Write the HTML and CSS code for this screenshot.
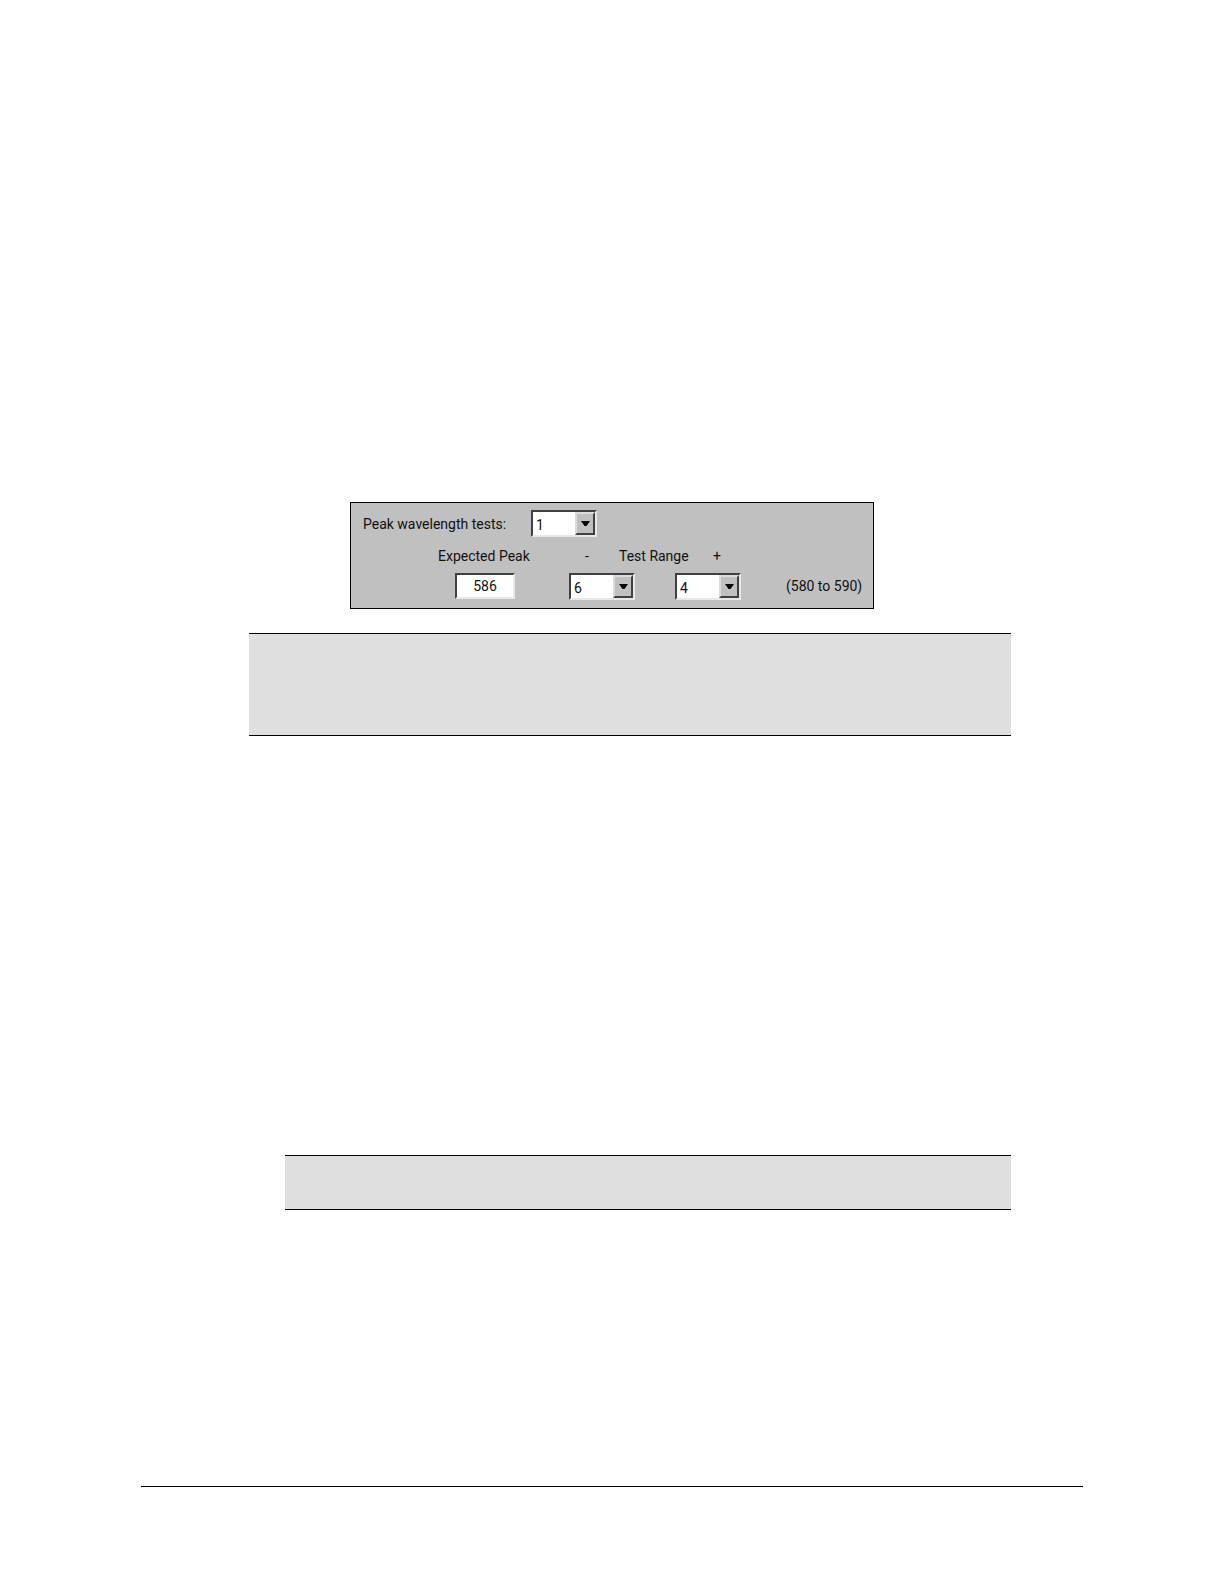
FILE: index.html
```html
<!DOCTYPE html>
<html lang="en">
<head>
<meta charset="utf-8">
<meta name="viewport" content="width=device-width, initial-scale=1">
<title>Peak wavelength tests</title>
<link rel="stylesheet" href="styles.css">
</head>
<body>
<main class="page">
  <form class="panel">
    <div class="tests-row">
      <label for="tests">Peak wavelength tests:</label>
      <span class="combo">
        <select id="tests"><option>1</option><option>2</option><option>3</option></select>
        <span class="arrow"><svg viewBox="0 0 9 5"><path d="M0 0H9L5.5 5H3.5Z"/></svg></span>
      </span>
    </div>
    <div class="headings">
      <label for="peak">Expected Peak</label>
      <label for="minus">-</label>
      <span>Test Range</span>
      <label for="plus">+</label>
    </div>
    <div class="values">
      <input class="field" id="peak" type="text" value="586">
      <span class="combo">
        <select id="minus"><option>6</option><option>5</option><option>4</option></select>
        <span class="arrow"><svg viewBox="0 0 9 5"><path d="M0 0H9L5.5 5H3.5Z"/></svg></span>
      </span>
      <span class="combo">
        <select id="plus"><option>4</option><option>5</option><option>6</option></select>
        <span class="arrow"><svg viewBox="0 0 9 5"><path d="M0 0H9L5.5 5H3.5Z"/></svg></span>
      </span>
      <output for="peak minus plus">(580 to 590)</output>
    </div>
  </form>
  <aside class="note note-tall"></aside>
  <aside class="note note-indented"></aside>
  <hr class="footer-rule">
</main>
</body>
</html>
```
FILE: styles.css
```css
* {
  box-sizing: border-box;
}

body {
  margin: 0;
  background: #fff;
  color: #111;
  font: 14px/20px Roboto, Tahoma, sans-serif;
}

.page {
  display: flex;
  flex-direction: column;
  min-height: 100vh;
  padding: 502px 141px 97px;
}

.panel {
  width: 100%;
  max-width: 524px;
  margin-left: 209px;
  padding: 7px 11px 8px 12px;
  border: 1px solid #000;
  background: #c0c0c0;
}

.tests-row {
  display: grid;
  grid-template-columns: 168px 66px;
  align-items: center;
}

.headings {
  display: grid;
  grid-template-columns: 147px 34px 94px auto;
  padding: 9px 0 7px 75px;
}

.values {
  display: grid;
  grid-template-columns: 114px 106px 111px auto;
  padding-left: 92px;
}

.values output {
  padding-top: 3px;
  white-space: nowrap;
}

.combo {
  position: relative;
  width: 66px;
  height: 27px;
}

.combo select,
.field {
  appearance: none;
  margin: 0;
  border: 2px solid;
  border-color: #404040 #e8e8e8 #e8e8e8 #404040;
  border-radius: 0;
  background: #fff;
  color: #111;
  font: inherit;
}

.combo select {
  width: 100%;
  height: 100%;
  padding: 2px 20px 0 3px;
}

.field {
  width: 60px;
  height: 26px;
  padding: 0;
  text-align: center;
}

.arrow {
  position: absolute;
  top: 2px;
  right: 2px;
  bottom: 2px;
  display: grid;
  place-items: center;
  width: 20px;
  border: 2px solid;
  border-color: #dcdcdc #404040 #404040 #dcdcdc;
  background: #c0c0c0;
  pointer-events: none;
}

.arrow svg {
  width: 9px;
  height: 5px;
}

.note {
  margin-left: 108px;
  margin-right: 72px;
  border: solid #000;
  border-width: 1px 0;
  background: #dfdfdf;
}

.note-tall {
  min-height: 103px;
  margin-top: 24px;
}

.note-indented {
  min-height: 55px;
  margin-top: 419px;
  margin-left: 144px;
}

.footer-rule {
  width: 100%;
  margin: auto 0 0;
  border: 0;
  border-top: 1px solid #000;
}
```
